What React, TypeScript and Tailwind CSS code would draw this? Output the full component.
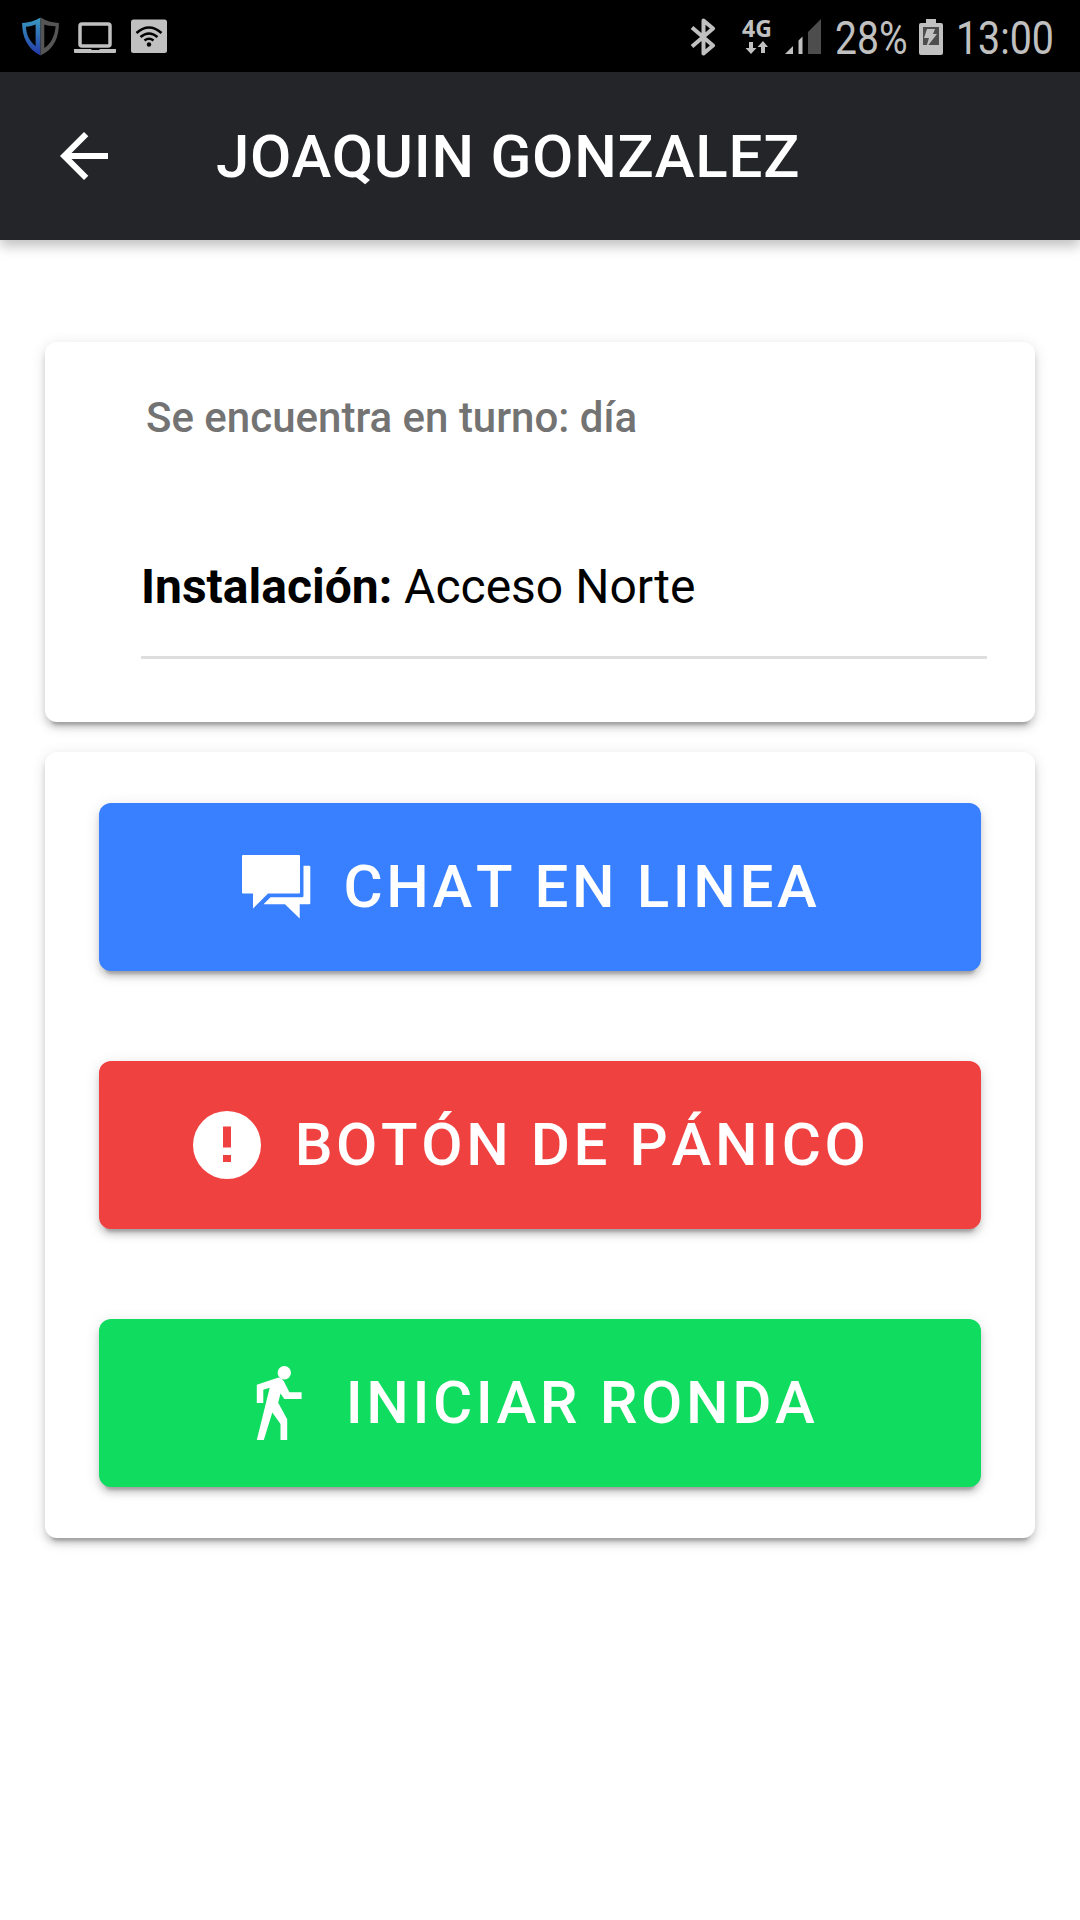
import type { ReactNode } from "react";

function StatusBar() {
  return (
    <div className="flex h-[72px] items-center justify-between bg-black pl-[22px] pr-[26px] text-[#c0c0c0]">
      <div className="flex items-center">
        <svg className="-ml-px" width="39" height="41" viewBox="1 2 36 37">
          <defs>
            <linearGradient id="shield" x1="0" y1="0" x2="0" y2="1">
              <stop offset="0" stopColor="#3a9cc0" />
              <stop offset="1" stopColor="#2338a8" />
            </linearGradient>
          </defs>
          <path d="M19 3 C14 6 8 8 2 8 C2 21 7 32 19 38 Z M14.500 9.500 V29.500 C9 25 6 19 5.500 11.500 C9 11.500 12 10.500 14.500 9.500 Z" fill="url(#shield)" fillRule="evenodd" />
          <path d="M19 3 C25 6.500 31 8 36 8 C36 21 32 32 19 38 Z M22.500 9.500 V31 C29 27 32 20 33 11 C29 11 25 10.500 22.500 9.500 Z" fill="#555" fillRule="evenodd" />
        </svg>
        <svg className="ml-[14px]" width="42" height="40" viewBox="0 0 42 40">
          <rect x="6" y="8" width="30" height="22" rx="2" fill="none" stroke="currentColor" strokeWidth="3.500" />
          <path d="M0 33 H17 L18 34 H25 L26 33 H42 V36 Q42 37 41 37 H1 Q0 37 0 36 Z" fill="currentColor" />
        </svg>
        <svg className="ml-[15px]" width="36" height="36" viewBox="0 0 36 36">
          <rect y="1.500" width="36" height="33.500" rx="2.500" fill="currentColor" />
          <path d="M5.500 15 Q18 4 30.500 15 M9.500 19 Q18 12 26.500 19 M13.500 22.500 Q18 19 22.500 22.500" fill="none" stroke="#000" strokeWidth="2.500" />
          <circle cx="18" cy="26.500" r="2.200" fill="#000" />
        </svg>
      </div>
      <div className="flex items-center">
        <svg className="mt-px" width="26" height="38" viewBox="0 0 26 38">
          <path d="M2 9.500 L23 27.500 L13.500 35.500 V2.500 L23 10.500 L2 28.500" fill="none" stroke="currentColor" strokeWidth="4" strokeLinejoin="round" />
        </svg>
        <div className="ml-[26px] flex w-[30px] flex-col items-center">
          <span className="font-['Open_Sans',sans-serif] text-[23px] font-bold leading-[19px]">4G</span>
          <svg className="mt-[3px]" width="24" height="13" viewBox="0 0 24 13">
            <path d="M4 1 H8 V7 H11.500 L6 13 L0.500 7 H4 Z M16 12 H20 V6 H23 L18 0 L12.500 6 H16 Z" fill="currentColor" />
          </svg>
        </div>
        <svg className="ml-[13px]" width="38" height="36" viewBox="0 0 38 36">
          <path d="M0 36 L8 28 V36 Z M13.500 36 V22.500 L17.500 18.500 V36 Z" fill="currentColor" />
          <path d="M23 36 V14 L36 1 V36 Z" fill="#4d4d4d" />
        </svg>
        <span className="ml-[12px] mt-[3px] w-[74px] origin-left scale-x-[0.85] whitespace-nowrap text-[46px] leading-[54px]">28%</span>
        <svg className="ml-[10px] mt-[2px]" width="24" height="36" viewBox="0 0 24 36">
          <path d="M7 0 H17 V4 H22 Q24 4 24 6 V34 Q24 36 22 36 H2 Q0 36 0 34 V6 Q0 4 2 4 H7 Z" fill="currentColor" />
          <rect x="4" y="8" width="16" height="18" fill="#4d4d4d" />
          <path d="M8 10 H16 L14 15 H18 L7 29 L10 19 H5 Z" fill="currentColor" />
        </svg>
        <span className="ml-[13px] mt-[3px] w-[98px] origin-left scale-x-[0.855] whitespace-nowrap text-[46px] leading-[54px]">13:00</span>
      </div>
    </div>
  );
}

function Card({ className, children }: { className: string; children: ReactNode }) {
  return (
    <section
      className={`rounded-[12px] bg-white shadow-[0_9px_3px_-6px_rgba(0,0,0,0.2),0_6px_6px_0_rgba(0,0,0,0.14),0_3px_15px_0_rgba(0,0,0,0.12)] ${className}`}
    >
      {children}
    </section>
  );
}

function ActionButton({ color, icon, label }: { color: string; icon: ReactNode; label: string }) {
  return (
    <button
      className={`flex h-[168px] w-full items-center justify-center rounded-[12px] text-[60px] font-medium tracking-[3.6px] text-white shadow-[0_9px_3px_-6px_rgba(0,0,0,0.2),0_6px_6px_0_rgba(0,0,0,0.14),0_3px_15px_0_rgba(0,0,0,0.12)] ${color}`}
    >
      <svg className="-ml-[26px] mr-[26px] shrink-0" width="84" height="84" viewBox="0 0 84 84" fill="currentColor">
        {icon}
      </svg>
      <span className="whitespace-nowrap leading-[84px] [font-kerning:none]">{label}</span>
    </button>
  );
}

const chatIcon = (
  <>
    <path d="M9 10 H65 Q66 10 66 11 V47.500 Q66 48.500 65 48.500 H34 L19 63.500 V48.500 H9 Q8 48.500 8 47.500 V11 Q8 10 9 10 Z" />
    <path d="M69.500 20.700 H75.300 Q76.300 20.700 76.300 21.700 V58.300 Q76.300 59.300 75.300 59.300 H65.700 V73.500 L51 59.300 H29.500 L36.500 52.300 H68 Q69.500 52.300 69.500 50.800 Z" />
  </>
);

const alertIcon = (
  <path
    fillRule="evenodd"
    d="M42 8 A34 34 0 1 1 42 76 A34 34 0 1 1 42 8 Z M38 23.500 H46 V44.500 H38 Z M38 52 H46 V59 H38 Z"
  />
);

const walkIcon = (
  <>
    <circle cx="48.300" cy="11.700" r="6.700" />
    <path d="M42.500 16.500 L20.800 23.800 V42 H27.300 V28.800 L33.700 26.700 L20.800 79 H27.800 L36.300 51.500 L44.500 63 V79 H51.200 V58.200 L42.200 41.700 L44.500 32.500 L48.300 38 H65.600 V31.300 H53.400 L47.700 20 Q46 17 42.500 16.500 Z" />
  </>
);

export default function App() {
  return (
    <div className="flex h-[1920px] w-[1080px] flex-col overflow-hidden bg-white font-[Roboto,sans-serif]">
      <StatusBar />
      <header className="flex h-[168px] items-center bg-[#242528] pl-[60px] text-white shadow-[0_6px_12px_rgba(0,0,0,0.25)]">
        <svg width="48" height="48" viewBox="0 0 48 48">
          <path d="M48 21 H11.500 L28.300 4.200 L24 0 L0 24 L24 48 L28.300 43.800 L11.500 27 H48 Z" fill="currentColor" />
        </svg>
        <h1 className="ml-[108px] mt-px text-[60px] font-medium leading-[72px] tracking-[0.75px]">JOAQUIN GONZALEZ</h1>
      </header>

      <main className="flex flex-col gap-[30px] px-[45px] pt-[102px]">
        <Card className="h-[380px] pl-24 pr-12">
          <p className="pl-[5px] pt-[51px] text-[42px] font-medium leading-[50px] text-[#737373]">Se encuentra en turno: día</p>
          <div className="mt-[78px] flex h-[138px] items-center border-b-[3px] border-[#dedede] pb-1 text-[48px] text-black">
            <p>
              <b>Instalación:</b> Acceso Norte
            </p>
          </div>
        </Card>
        <Card className="flex h-[786px] flex-col gap-[90px] px-[54px] pt-[51px]">
          <ActionButton color="bg-[#3880ff]" icon={chatIcon} label="CHAT EN LINEA" />
          <ActionButton color="bg-[#f04141]" icon={alertIcon} label="BOTÓN DE PÁNICO" />
          <ActionButton color="bg-[#10dc60]" icon={walkIcon} label="INICIAR RONDA" />
        </Card>
      </main>
    </div>
  );
}
